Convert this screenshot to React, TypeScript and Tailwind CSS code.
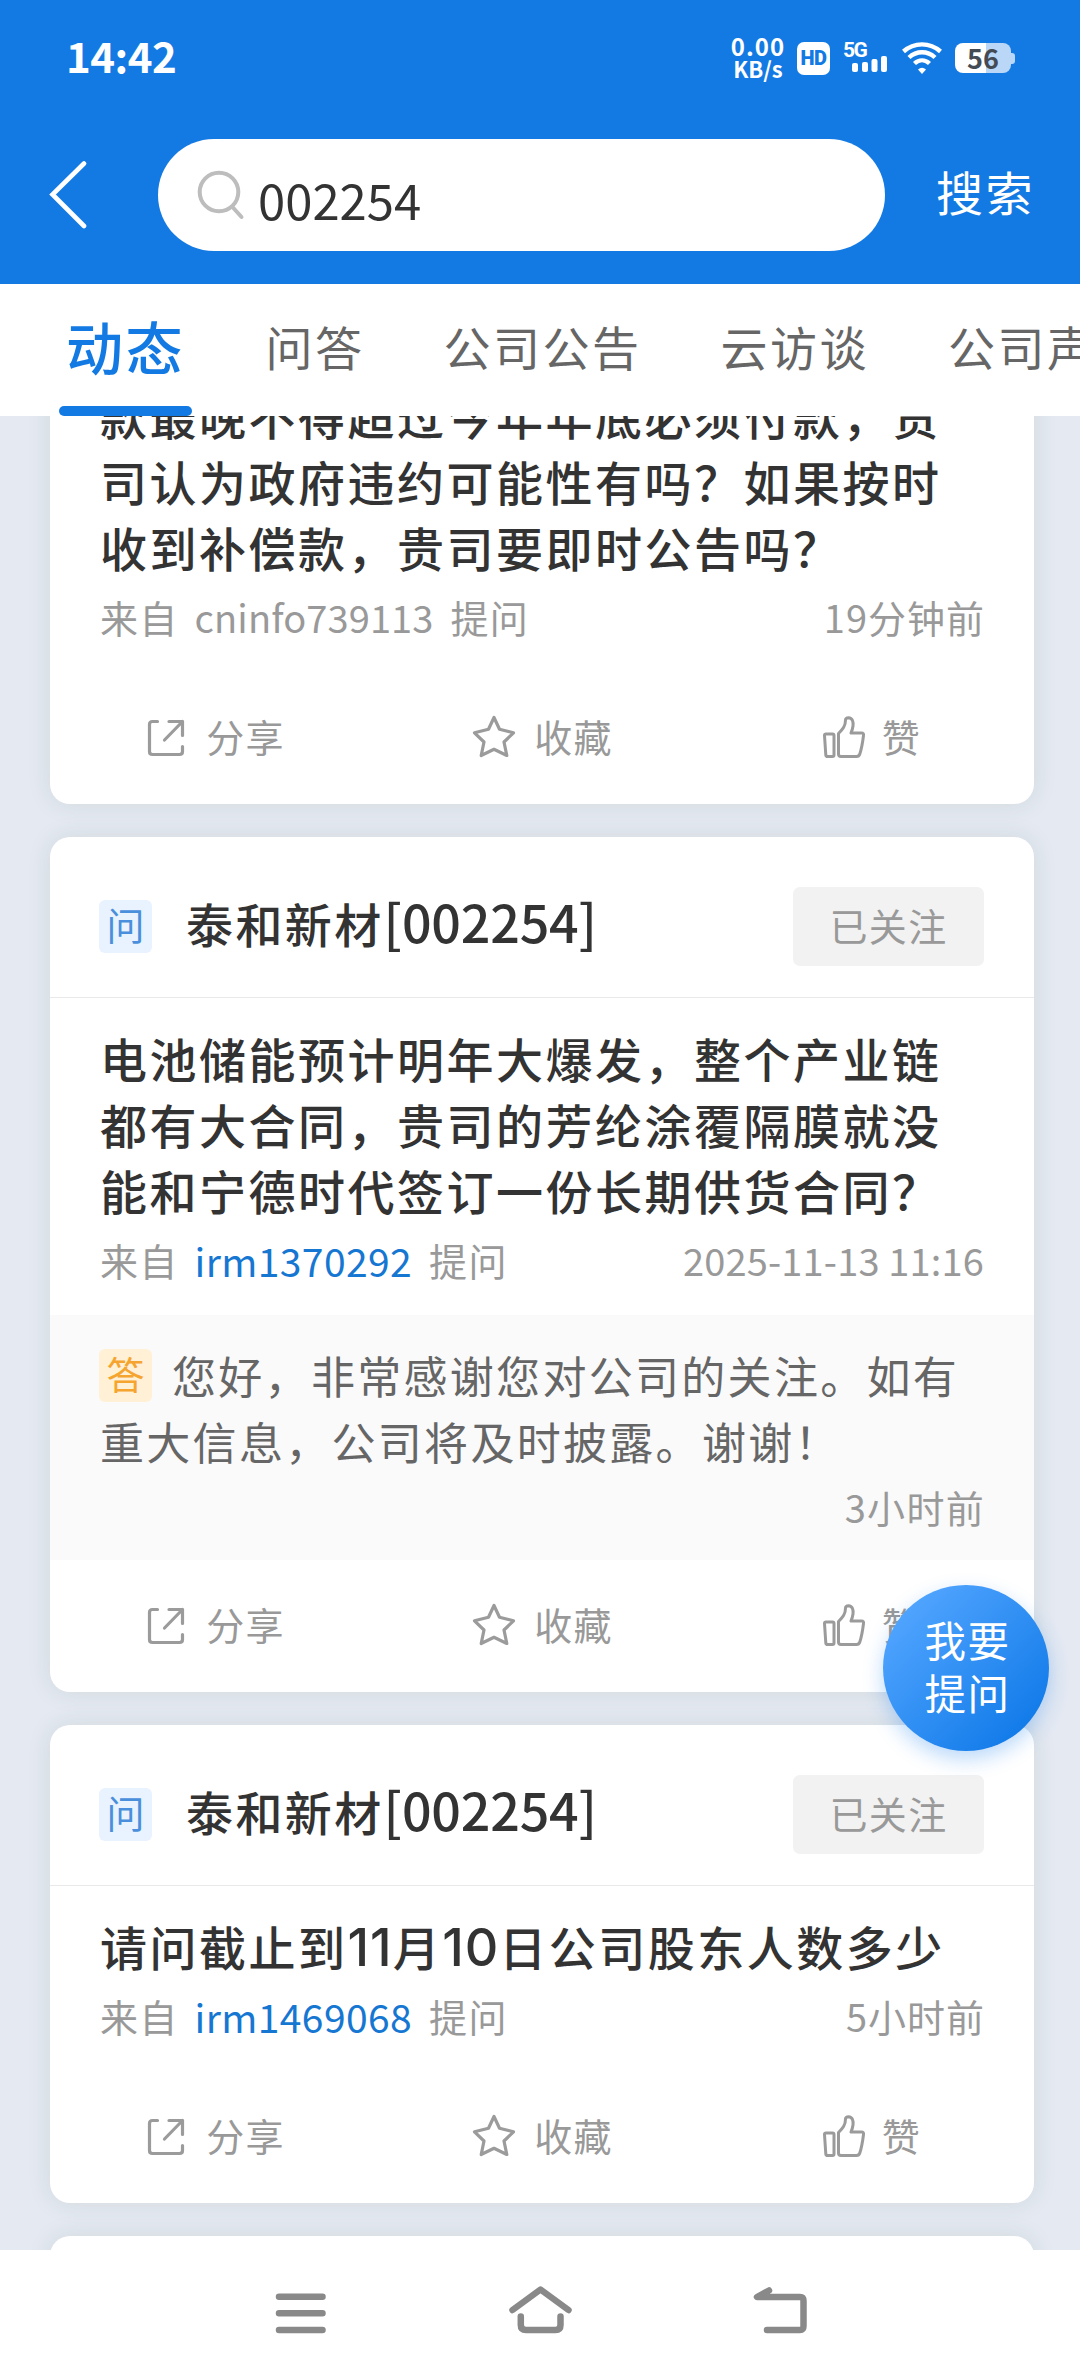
import { ReactNode } from "react";
import clsx from "clsx";

interface Question {
  id: number;
  title?: string;
  code?: string;
  lines: ReactNode[];
  user: string;
  userLinked?: boolean;
  time: string;
  answer?: { lines: string[]; time: string };
}

const TABS = ["动态", "问答", "公司公告", "云访谈", "公司声音"];

const QUESTIONS: Question[] = [
  {
    id: 1,
    lines: [
      "款最晚不得超过今年年底必须付款，贵",
      "司认为政府违约可能性有吗？如果按时",
      "收到补偿款，贵司要即时公告吗？",
    ],
    user: "cninfo739113",
    time: "19分钟前",
  },
  {
    id: 2,
    title: "泰和新材",
    code: "[002254]",
    lines: [
      "电池储能预计明年大爆发，整个产业链",
      "都有大合同，贵司的芳纶涂覆隔膜就没",
      "能和宁德时代签订一份长期供货合同？",
    ],
    user: "irm1370292",
    userLinked: true,
    time: "2025-11-13 11:16",
    answer: {
      lines: ["您好，非常感谢您对公司的关注。如有", "重大信息，公司将及时披露。谢谢！"],
      time: "3小时前",
    },
  },
  {
    id: 3,
    title: "泰和新材",
    code: "[002254]",
    lines: [
      <>
        请问截止到<Num>11</Num>月<Num>10</Num>日公司股东人数多少
      </>,
    ],
    user: "irm1469068",
    userLinked: true,
    time: "5小时前",
  },
];

function Num({ children }: { children: ReactNode }) {
  return <span className="font-['Inter'] text-[52px] leading-none tracking-[1px]">{children}</span>;
}

function StatusBar() {
  return (
    <div className="flex h-[116px] items-center justify-between pl-[66px] pr-[65px] text-white">
      <span className="mb-[6px] text-[42px] leading-none font-bold tracking-[-0.500px]">14:42</span>
      <div className="flex items-center">
        <div className="mb-[3px] flex w-[56px] flex-col items-center text-[24px] leading-[22px] font-bold">
          <span className="tracking-[1px]">0.00</span>
          <span className="text-[22px]">KB/s</span>
        </div>
        <div className="ml-[11px] flex h-[33px] w-[33px] items-center justify-center rounded-[7px] bg-white font-['Roboto'] text-[20px] leading-none font-black tracking-[-0.500px] text-[#147ae3]">
          HD
        </div>
        <div className="relative ml-[13px] h-[34px] w-[45px]">
          <span className="absolute top-0 left-0 font-['Roboto'] text-[21px] leading-[18px] font-bold tracking-[-1.500px]">5G</span>
          <svg className="absolute inset-0" width="45" height="34" viewBox="0 0 45 34" fill="currentColor">
            <rect x="9" y="22" width="6" height="9" rx="2" />
            <rect x="19" y="21" width="6" height="10" rx="2" />
            <rect x="28.5" y="18" width="6" height="13" rx="2" />
            <rect x="38" y="15" width="6" height="16" rx="2" />
          </svg>
        </div>
        <svg className="ml-[14px]" width="40" height="33" viewBox="0 0 40 33" fill="none" stroke="currentColor" strokeWidth="4.400">
          <path d="M1.500 9.500C12 0 28 0 38.500 9.500" />
          <path d="M7 15.500C14.500 8.500 25.500 8.500 33 15.500" />
          <path d="M12.500 21.500C17 17.300 23 17.300 27.500 21.500" />
          <path d="M16 27.500Q20 24 24 27.500L20 32Z" fill="currentColor" stroke="none" />
        </svg>
        <div className="ml-[13px] flex items-center">
          <div className="flex h-[30px] w-[56px] items-center justify-center rounded-[8px] bg-[linear-gradient(90deg,#fff_56%,#bbd7f7_56%)] pb-[1px] text-[27px] leading-none font-bold text-[#454b54]">
            56
          </div>
          <div className="h-[11px] w-[4px] rounded-r-[3px] bg-[#bbd7f7]" />
        </div>
      </div>
    </div>
  );
}

function SearchHeader() {
  return (
    <header className="h-[284px] shrink-0 bg-[#147ae3]">
      <StatusBar />
      <div className="flex items-center pt-[23px] pl-[48px]">
        <svg width="40" height="68" viewBox="0 0 40 68" fill="none" stroke="#fff" strokeWidth="4.600" strokeLinecap="round">
          <path d="M36 2.500L4.500 33.500L36 65" />
        </svg>
        <div className="ml-[70px] flex h-[112px] w-[727px] items-center rounded-full bg-white pl-[38px]">
          <svg width="50" height="52" viewBox="0 0 50 52" fill="none" stroke="#bdbdbd" strokeWidth="4" strokeLinecap="round">
            <circle cx="23" cy="23" r="19.300" />
            <path d="M36.500 38L45.500 48" />
          </svg>
          <span className="mt-[6px] ml-[12px] text-[49px] leading-none text-[#333]">002254</span>
        </div>
        <span className="mb-[9px] ml-[51px] text-[47px] leading-none tracking-[2.600px] text-white">搜索</span>
      </div>
    </header>
  );
}

function TabBar() {
  return (
    <nav className="relative flex h-[132px] shrink-0 items-center gap-[79px] overflow-hidden bg-white pb-[9px] pl-[66px] text-[47px] leading-none tracking-[2.500px] whitespace-nowrap text-[#666]">
      {TABS.map((tab, i) => (
        <span key={tab} className={clsx("shrink-0", i === 0 && "w-[120.500px] text-[57px] font-medium text-[#147ae3]")}>
          {tab}
        </span>
      ))}
      <div className="absolute bottom-0 left-[59px] h-[10px] w-[133px] rounded-full bg-[#147ae3]" />
    </nav>
  );
}

function ShareIcon() {
  return (
    <svg width="42" height="42" viewBox="0 0 42 42" fill="none" stroke="#9b9b9b" strokeWidth="3.200" strokeLinecap="round" strokeLinejoin="round">
      <path d="M12.500 4.500H7.500Q4.500 4.500 4.500 7.500V34.500Q4.500 37.500 7.500 37.500H34.500Q37.500 37.500 37.500 34.500V29.500" />
      <path d="M24 4.500H37.500V18.500M37.500 4.500L19.500 23" />
    </svg>
  );
}

function StarIcon() {
  return (
    <svg width="42" height="42" viewBox="0 1.500 42 42" fill="none" stroke="#9b9b9b" strokeWidth="3.200" strokeLinejoin="round" overflow="visible">
      <path d="M21 2L26.500 13.800L40.500 17.300L31 26.500L33.800 40L21 33.800L8.200 40L11 26.500L1.500 17.300L15.500 13.800Z" />
    </svg>
  );
}

function LikeIcon() {
  return (
    <svg width="42" height="42" viewBox="-2 1 42 42" fill="none" stroke="#9b9b9b" strokeWidth="3" strokeLinejoin="round" overflow="visible">
      <path d="M3 18H9.500Q11 18 11 19.500V39Q11 40.500 9.500 40.500H4.500Q3 40.500 2.800 39L1.500 19.500Q1.400 18 3 18Z" />
      <path d="M15.500 17.500C20 13 22.500 10 22.500 4Q22.700 1.800 25.500 1.800C29.500 2 30.500 6 30 10Q29.500 13.500 28 17H38.500Q41 17 40.500 19.500C39.700 26 38.800 32 36.800 38Q36 40.500 33.500 40.500H18Q15.500 40.500 15.500 38Z" />
    </svg>
  );
}

function Tag({ kind }: { kind: "问" | "答" }) {
  return (
    <span
      className={clsx(
        "flex h-[53px] w-[53px] shrink-0 items-center justify-center rounded-[6px] pb-[5px] text-[38px] leading-none tracking-normal",
        kind === "问" ? "bg-[#e8f3ff] text-[#4a8fdc]" : "bg-[#fff0d6] text-[#f5a52f]"
      )}
    >
      {kind}
    </span>
  );
}

function Actions() {
  const items = [
    { label: "分享", icon: <ShareIcon /> },
    { label: "收藏", icon: <StarIcon /> },
    { label: "赞", icon: <LikeIcon /> },
  ];
  return (
    <div className="grid h-[132px] grid-cols-3">
      {items.map((item) => (
        <div key={item.label} className="flex items-center justify-center gap-[19px] pl-[2px]">
          {item.icon}
          <span className="mb-[5px] text-[38px] leading-none tracking-[1.300px] text-[#999]">{item.label}</span>
        </div>
      ))}
    </div>
  );
}

function QuestionCard({ q }: { q: Question }) {
  return (
    <article className="rounded-[20px] bg-white shadow-[0_0_24px_rgba(60,85,30,0.1)]">
      {q.title && (
        <div className="flex h-[161px] items-center border-b border-[#e9e9e9] pt-[18px] pr-[50px] pl-[49px]">
          <Tag kind="问" />
          <h2 className="mb-[7px] ml-[34px] flex-1 text-[47px] leading-[66px] font-medium tracking-[2.400px] text-[#333]">
            {q.title}
            <span className="text-[52px] leading-none tracking-[-0.200px]">{q.code}</span>
          </h2>
          <button className="h-[79px] w-[191px] rounded-[7px] bg-[#f2f2f2] pb-[3px] text-[38px] leading-none tracking-[1.300px] text-[#999]">
            已关注
          </button>
        </div>
      )}
      <div className="px-[50px] pt-[27px] pb-[22px]">
        <div className="text-[47px] leading-[66px] font-medium tracking-[2.500px] whitespace-nowrap text-[#333]">
          {q.lines.map((line, i) => (
            <p key={i} className="h-[66px]">
              {line}
            </p>
          ))}
        </div>
        <div className="mt-1 flex h-[66px] items-center justify-between text-[38px] leading-[66px] text-[#999]">
          <div className="flex items-center">
            <span className="tracking-[1.300px]">来自</span>
            <span className={clsx("mx-[16px]", q.userLinked ? "text-[39px] tracking-[0.400px] text-[#1677d2]" : "tracking-[0.100px]")}>
              {q.user}
            </span>
            <span className="ml-[1px] tracking-[1.300px]">提问</span>
          </div>
          <span className={q.time.endsWith("前") ? "-mr-px tracking-[1px]" : "tracking-[0.150px]"}>{q.time}</span>
        </div>
      </div>
      {q.answer && (
        <div className="h-[245px] bg-[#fafafa] px-[50px] pt-[27px]">
          <div className="text-[44px] leading-[66px] tracking-[2.300px] whitespace-nowrap text-[#666]">
            <div className="-ml-px flex items-center">
              <Tag kind="答" />
              <span className="ml-[20px]">{q.answer.lines[0]}</span>
            </div>
            <p>{q.answer.lines[1]}</p>
          </div>
          <div className="-mr-px text-right text-[38px] leading-[66px] tracking-[1.300px] text-[#999]">{q.answer.time}</div>
        </div>
      )}
      <Actions />
    </article>
  );
}

function SystemNav() {
  return (
    <footer className="flex h-[126px] shrink-0 justify-center bg-white pt-[34px]">
      <svg width="540" height="52" viewBox="270 2284 540 52" fill="none" stroke="#898989" strokeWidth="6.500" strokeLinecap="round" strokeLinejoin="round">
        <path d="M279 2296.700H322.500M279 2313.300H322.500M279 2330H322.500" />
        <path d="M512.500 2310L540.500 2289.500L568.500 2310" />
        <path d="M520.800 2316.500V2325Q520.800 2330 526 2330H555.500Q560.500 2330 560.500 2325V2316.500" />
        <path d="M769 2290.500L757 2297H800Q803.500 2297 803.500 2301V2326Q803.500 2330 800 2330H767" />
      </svg>
    </footer>
  );
}

export default function App() {
  return (
    <div className="relative flex h-[2376px] w-[1080px] flex-col overflow-hidden bg-[#e4e9f2] font-['Noto_Sans_CJK_SC',sans-serif]">
      <SearchHeader />
      <TabBar />
      <main className="min-h-0 flex-1 overflow-hidden">
        <div className="-mt-[61px] flex flex-col gap-[33px] pr-[46px] pl-[50px]">
          {QUESTIONS.map((q) => (
            <QuestionCard key={q.id} q={q} />
          ))}
          <div className="h-[120px] rounded-[20px] bg-white shadow-[0_0_24px_rgba(60,85,30,0.1)]" />
        </div>
      </main>
      <SystemNav />
      <button className="absolute top-[1585px] left-[883px] flex h-[166px] w-[166px] flex-col items-center justify-center rounded-full bg-[linear-gradient(135deg,#53a6ff_10%,#0f79e8_90%)] pb-[4px] pl-[3px] text-[41.500px] leading-[53px] tracking-[1.500px] text-white shadow-[0_8px_20px_rgba(30,130,240,0.3)]">
        <span>我要</span>
        <span>提问</span>
      </button>
    </div>
  );
}
